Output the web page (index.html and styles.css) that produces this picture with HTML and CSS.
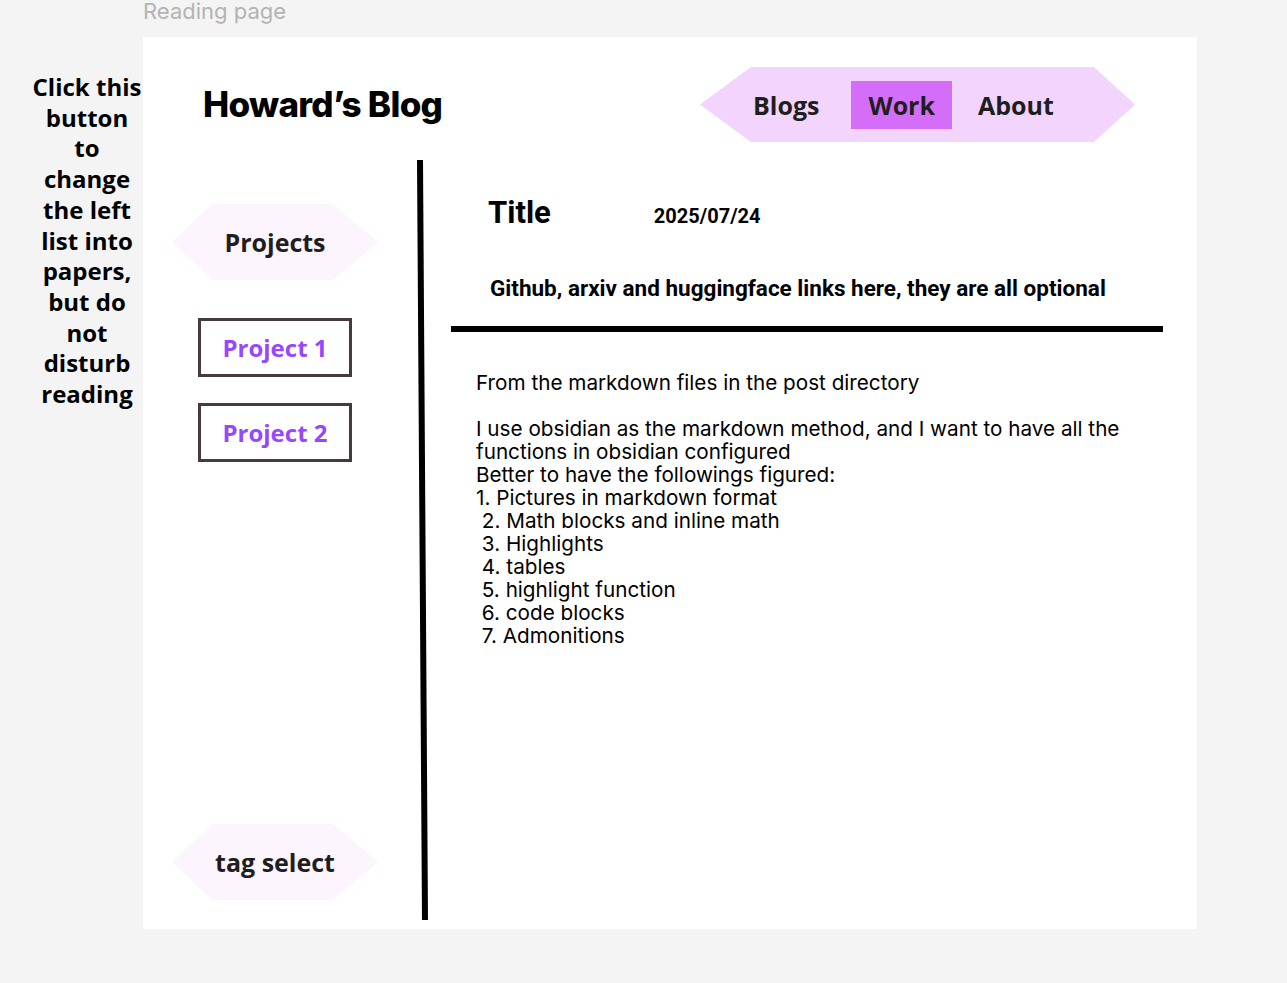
FILE: index.html
```html
<!DOCTYPE html>
<html lang="en">
<head>
<meta charset="utf-8">
<title>Reading page</title>
<link rel="stylesheet" href="styles.css">
</head>
<body>
<div class="canvas">
  <div class="frame-label">Reading page</div>
  <p class="note">Click this<br>button<br>to<br>change<br>the left<br>list into<br>papers,<br>but do<br>not<br>disturb<br>reading</p>
  <div class="frame">
    <header class="top">
      <div class="logo">Howard’s Blog</div>
      <nav class="nav">
        <a class="nav-item">Blogs</a>
        <a class="nav-item active">Work</a>
        <a class="nav-item">About</a>
      </nav>
    </header>
    <main class="main">
      <aside class="side">
        <div class="hex">Projects</div>
        <a class="proj first">Project 1</a>
        <a class="proj">Project 2</a>
        <div class="hex tag">tag select</div>
      </aside>
      <svg class="divider" width="14" height="760" viewBox="0 0 14 760"><line x1="5" y1="0" x2="10" y2="760" stroke="#000" stroke-width="6"/></svg>
      <article class="post">
        <div class="title-row"><h1 class="title">Title</h1><span class="date">2025/07/24</span></div>
        <p class="links">Github, arxiv and huggingface links here, they are all optional</p>
        <div class="rule"></div>
        <div class="post-body">From the markdown files in the post directory

I use obsidian as the markdown method, and I want to have all the functions in obsidian configured
Better to have the followings figured:
1. Pictures in markdown format
 2. Math blocks and inline math
 3. Highlights
 4. tables
 5. highlight function
 6. code blocks
 7. Admonitions</div>
      </article>
    </main>
  </div>
</div>
</body>
</html>
```
FILE: styles.css
```css
html, body {
  margin: 0;
  padding: 0;
  background: #f4f4f4;
}

.canvas {
  position: relative;
  width: 1287px;
  height: 983px;
  overflow: hidden;
  background: #f4f4f4;
}

.frame-label {
  position: absolute;
  left: 143px;
  top: 0;
  font-family: "Inter", sans-serif;
  font-size: 22px;
  line-height: 22px;
  color: #b3b3b3;
}

.note {
  position: absolute;
  left: 30px;
  top: 72px;
  width: 114px;
  margin: 0;
  text-align: center;
  font-family: "Open Sans", sans-serif;
  font-weight: 700;
  font-size: 24px;
  line-height: 30.7px;
  color: #000;
}

.frame {
  position: absolute;
  left: 143px;
  top: 37px;
  width: 1054px;
  height: 892px;
  background: #fff;
  display: flex;
  flex-direction: column;
}

.top {
  display: flex;
  justify-content: space-between;
  align-items: flex-start;
  padding: 30px 62px 0 60px;
  height: 105px;
  box-sizing: border-box;
}

.logo {
  margin-top: 17px;
  font-family: "Inter", sans-serif;
  font-weight: 800;
  font-size: 35px;
  line-height: 40px;
  letter-spacing: -0.02em;
  color: #000;
}

.nav {
  width: 435px;
  height: 75px;
  box-sizing: border-box;
  padding-left: 35px;
  display: flex;
  align-items: center;
  gap: 11px;
  background: #f2d4fc;
  clip-path: polygon(0 50%, 51px 0, calc(100% - 41px) 0, 100% 50%, calc(100% - 41px) 100%, 51px 100%);
}

.nav-item {
  height: 48px;
  line-height: 48px;
  padding: 0 18px;
  font-family: "Open Sans", sans-serif;
  font-weight: 700;
  font-size: 25px;
  color: #1e1e1e;
}

.nav-item.active {
  margin: 0 -3px 0 3px;
  padding: 0 17px;
  background: #d46ef8;
}

.main {
  display: flex;
  margin-top: 18px;
  height: 760px;
}

.side {
  width: 206px;
  margin-left: 29px;
  display: flex;
  flex-direction: column;
  align-items: center;
  padding: 44px 0 20px;
  box-sizing: border-box;
}

.hex {
  width: 206px;
  height: 76px;
  display: flex;
  align-items: center;
  justify-content: center;
  background: #fcf5fe;
  clip-path: polygon(0 50%, 40px 0, calc(100% - 45px) 0, 100% 50%, calc(100% - 45px) 100%, 40px 100%);
  font-family: "Open Sans", sans-serif;
  font-weight: 700;
  font-size: 25px;
  color: #1e1e1e;
}

.hex.tag {
  margin-top: auto;
}

.proj {
  width: 154px;
  height: 59px;
  box-sizing: border-box;
  border: 3px solid #463a3e;
  display: flex;
  align-items: center;
  justify-content: center;
  margin-top: 26px;
  font-family: "Open Sans", sans-serif;
  font-weight: 700;
  font-size: 24px;
  color: #9747ff;
}

.proj.first {
  margin-top: 38px;
}

.divider {
  display: block;
  margin-left: 37px;
  flex: none;
}

.post {
  width: 712px;
  margin-left: 22px;
  display: flex;
  flex-direction: column;
}

.title-row {
  display: flex;
  align-items: baseline;
  gap: 103px;
  margin-top: 35px;
  padding-left: 37px;
}

.title {
  margin: 0;
  font-family: "Roboto", sans-serif;
  font-weight: 700;
  font-size: 31px;
  line-height: 36px;
  color: #000;
}

.date {
  font-family: "Roboto", sans-serif;
  font-weight: 700;
  font-size: 20px;
  color: #000;
}

.links {
  margin: 44px 0 0;
  padding-left: 39px;
  font-family: "Roboto", sans-serif;
  font-weight: 700;
  font-size: 22.5px;
  line-height: 26px;
  color: #000;
}

.rule {
  margin-top: 25px;
  height: 6px;
  background: #000;
}

.post-body {
  margin-top: 39px;
  padding-left: 25px;
  width: 670px;
  white-space: pre-wrap;
  font-family: "Inter", sans-serif;
  font-size: 20.7px;
  line-height: 23px;
  color: #000;
}
```
